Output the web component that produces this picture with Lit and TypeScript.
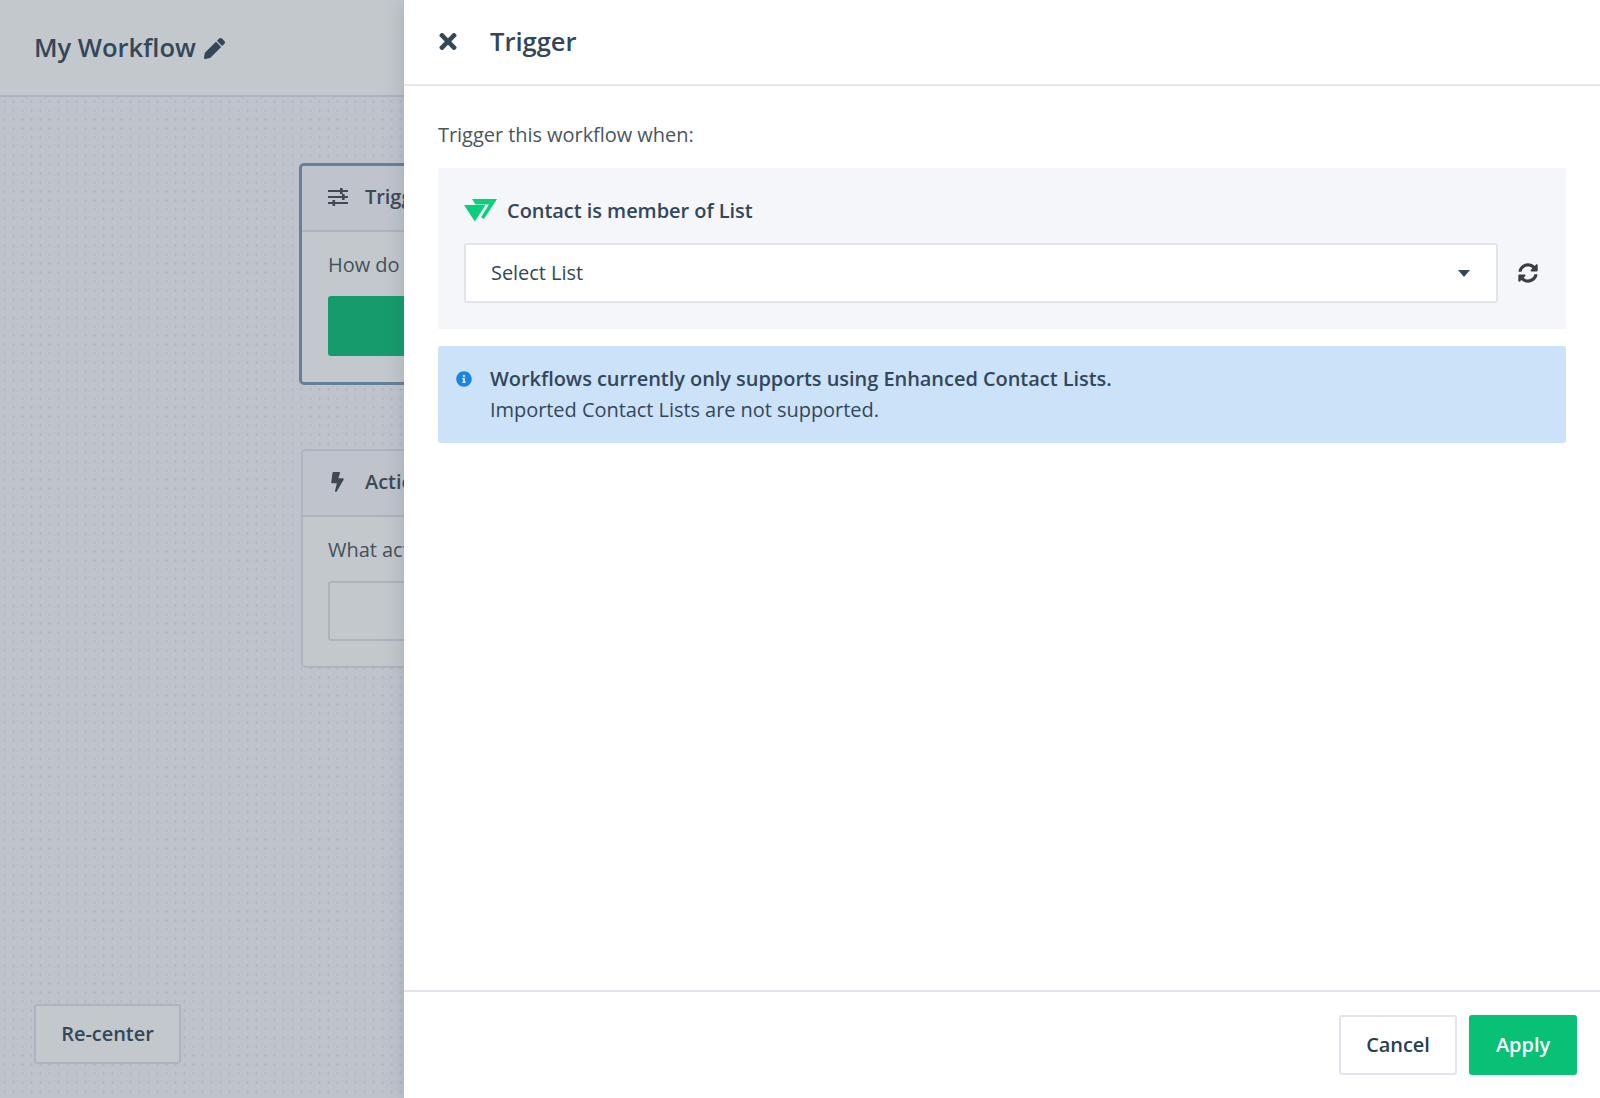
import { LitElement, html, css, svg } from "lit";
import { customElement } from "lit/decorators.js";

const PENCIL = "M497.9 142.1l-46.1 46.1c-4.7 4.7-12.3 4.7-17 0l-111-111c-4.7-4.7-4.7-12.3 0-17l46.1-46.1c18.7-18.7 49.1-18.7 67.9 0l60.1 60.1c18.8 18.7 18.8 49.1 0 67.9zM284.2 99.8L21.6 362.4.4 483.9c-2.9 16.4 11.4 30.6 27.8 27.8l121.5-21.3 262.6-262.6c4.7-4.7 4.7-12.3 0-17l-111-111c-4.8-4.7-12.4-4.7-17.1 0z";
const TIMES = "M242.72 256l100.07-100.07c12.28-12.28 12.28-32.19 0-44.48l-22.24-22.24c-12.28-12.28-32.19-12.28-44.48 0L176 189.28 75.93 89.21c-12.28-12.28-32.19-12.28-44.48 0L9.21 111.45c-12.28 12.28-12.28 32.19 0 44.48L109.28 256 9.21 356.07c-12.28 12.28-12.28 32.19 0 44.48l22.24 22.24c12.28 12.28 32.2 12.28 44.48 0L176 322.72l100.07 100.07c12.28 12.28 32.2 12.28 44.48 0l22.24-22.24c12.28-12.28 12.28-32.19 0-44.48L242.72 256z";
const SYNC = "M370.72 133.28C339.458 104.008 298.888 87.962 255.848 88c-77.458.068-144.328 53.178-162.791 126.85-1.344 5.363-6.122 9.15-11.651 9.15H24.103c-7.498 0-13.194-6.807-11.807-14.176C33.933 94.924 134.813 8 256 8c66.448 0 126.791 26.136 171.315 68.685L463.03 40.97C478.149 25.851 504 36.559 504 57.941V192c0 13.255-10.745 24-24 24H345.941c-21.382 0-32.09-25.851-16.971-40.971l41.75-41.749zM32 296h134.059c21.382 0 32.09 25.851 16.971 40.971l-41.75 41.75c31.262 29.273 71.835 45.319 114.876 45.28 77.418-.07 144.315-53.144 162.787-126.849 1.344-5.363 6.122-9.15 11.651-9.15h57.304c7.498 0 13.194 6.807 11.807 14.176C478.067 417.076 377.187 504 256 504c-66.448 0-126.791-26.136-171.315-68.685L48.97 471.03C33.851 486.149 8 475.441 8 454.059V320c0-13.255 10.745-24 24-24z";
const INFO = "M256 8C119.043 8 8 119.083 8 256c0 136.997 111.043 248 248 248s248-111.003 248-248C504 119.083 392.957 8 256 8zm0 110c23.196 0 42 18.804 42 42s-18.804 42-42 42-42-18.804-42-42 18.804-42 42-42zm56 254c0 6.627-5.373 12-12 12h-88c-6.627 0-12-5.373-12-12v-24c0-6.627 5.373-12 12-12h12v-64h-12c-6.627 0-12-5.373-12-12v-24c0-6.627 5.373-12 12-12h64c6.627 0 12 5.373 12 12v100h12c6.627 0 12 5.373 12 12v24z";
const BOLT = "M296 160H180.6l42.6-129.8C227.2 15 215.7 0 200 0H56C44 0 33.8 8.9 32.2 20.8l-32 240C-1.7 275.2 9.5 288 24 288h118.7L96.6 482.5c-3.6 15.2 8 29.5 23.3 29.5 8.4 0 16.4-4.4 20.8-12l176-304c9.3-15.9-2.2-36-20.7-36z";

const icon = (d: string, vb: string, cls: string) =>
  html`<svg class=${cls} viewBox=${vb} fill="currentColor">${svg`<path d=${d}></path>`}</svg>`;

@customElement("app-root")
export class AppRoot extends LitElement {
  static styles = css`
    :host {
      display: block;
      position: relative;
      width: 1600px;
      height: 1098px;
      overflow: hidden;
      font-family: "Open Sans", sans-serif;
      letter-spacing: -0.05px;
      color: #33475b;
      background: #f9f9ff;
    }
    * { box-sizing: border-box; }
    .page { display: flex; flex-direction: column; height: 1098px; width: 404px; }
    .top {
      height: 97px;
      flex: none;
      background: #fff;
      border-bottom: 2px solid #dfe3eb;
      padding: 0 34px;
      display: flex;
      align-items: center;
      gap: 8px;
      font-size: 25.6px;
      font-weight: 600;
      width: 1600px;
    }
    .pencil { width: 21px; height: 21px; margin-top: 1px; }
    .canvas {
      position: relative;
      flex: 1;
      width: 1600px;
      background-color: #f9f9ff;
      background-image: radial-gradient(circle at center, #e2e3ec 0.7px, transparent 1.5px);
      background-size: 9px 9px;
    }
    .card {
      position: absolute;
      left: 301px;
      width: 400px;
      background: #fff;
      border: 2px solid #dfe3eb;
      border-radius: 5px;
      overflow: hidden;
    }
    .card.trigger { top: 66px; height: 222px; border: 3px solid #7c98b6; left: 299px; }
    .card.action { top: 352px; height: 219px; }
    .card-head {
      height: 66px;
      display: flex;
      align-items: center;
      gap: 17px;
      padding: 0 0 3px 26px;
      background: #f9f9ff;
      border-bottom: 2px solid #dfe3eb;
      font-size: 20px;
      font-weight: 600;
      color: #424a52;
    }
    .card.action .card-head { padding-left: 27px; gap: 20px; }
    .head-icon { width: 20px; height: 20px; flex: none; }
    .card.action .head-icon { width: 15px; height: 20px; }
    .card-body { padding: 18px 0 0 26px; font-size: 20px; color: #4a5560; line-height: 30px; }
    .card.action .card-body { padding-left: 25px; }
    .green { margin-top: 16px; width: 300px; height: 60px; background: #08c076; border-radius: 3px; }
    .blank { margin-top: 16px; width: 300px; height: 60px; background: #fff; border: 2px solid #dfe3eb; border-radius: 3px; }
    .recenter {
      position: absolute;
      left: 34px;
      top: 907px;
      width: 147px;
      height: 60px;
      background: #fff;
      border: 2px solid #dfe3eb;
      border-radius: 3px;
      font: 600 20px "Open Sans", sans-serif;
      letter-spacing: -0.05px;
      color: #33475b;
      padding: 0 0 2px;
    }
    .overlay { position: absolute; inset: 0; background: rgba(55, 72, 85, 0.3); }
    .panel {
      position: absolute;
      left: 404px;
      top: 0;
      width: 1196px;
      height: 1098px;
      background: #fff;
      display: flex;
      flex-direction: column;
      box-shadow: 0 0 20px rgba(51, 71, 91, 0.2);
    }
    .panel-head {
      height: 86px;
      flex: none;
      display: flex;
      align-items: center;
      padding: 0 0 1px 34px;
      gap: 32px;
      border-bottom: 2px solid #e6e7ef;
      font-size: 25.6px;
      font-weight: 600;
    }
    .close { width: 20px; height: 25px; }
    .panel-body { flex: 1; padding: 33px 34px 0; }
    .lead { font-size: 20px; line-height: 32px; color: #4a5560; margin-bottom: 17px; }
    .grey {
      background: #f4f6fa;
      padding: 24px 0 26px 26px;
      height: 161px;
    }
    .cond {
      display: flex;
      align-items: center;
      gap: 10px;
      height: 36px;
      font-size: 20px;
      font-weight: 600;
      margin-bottom: 15px;
    }
    .logo { width: 33px; height: 24px; flex: none; }
    .select-row { display: flex; align-items: center; gap: 20px; }
    .select {
      width: 1034px;
      height: 60px;
      background: #fff;
      border: 2px solid #e2e4ec;
      border-radius: 3px;
      display: flex;
      align-items: center;
      justify-content: space-between;
      padding: 0 26px 1px 25px;
      font-size: 20px;
    }
    .caret { width: 12px; height: 7px; margin-top: 1px; }
    .refresh { width: 20px; height: 20px; color: #3b3f43; }
    .note {
      margin-top: 17px;
      height: 97px;
      background: #cbe2f9;
      border-radius: 3px;
      display: flex;
      padding: 17px 0 0 18px;
      gap: 18px;
      font-size: 20px;
      line-height: 31px;
    }
    .info { width: 16px; height: 16px; color: #1a84e5; margin-top: 8px; flex: none; }
    .note b { display: block; font-weight: 600; }
    .panel-foot {
      height: 108px;
      flex: none;
      border-top: 2px solid #e2e4ec;
      display: flex;
      justify-content: flex-end;
      gap: 12px;
      padding: 23px 23px 0 0;
    }
    .btn {
      height: 60px;
      border-radius: 3px;
      font: 600 20px "Open Sans", sans-serif;
      letter-spacing: -0.05px;
      border: 2px solid #e2e4ec;
      background: #fff;
      color: #2d3e50;
      width: 118px;
      padding: 0 0 1px;
    }
    .btn.primary { background: #08c076; border-color: #08c076; color: #fff; width: 108px; }
  `;

  render() {
    return html`
      <div class="page">
        <div class="top">My Workflow ${icon(PENCIL, "0 0 512 512", "pencil")}</div>
        <div class="canvas">
          <div class="card trigger">
            <div class="card-head">
              <svg class="head-icon" viewBox="0 0 20 20" fill="currentColor">
                <rect x="0" y="3" width="20" height="2"></rect>
                <rect x="0" y="9" width="20" height="2"></rect>
                <rect x="0" y="15" width="20" height="2"></rect>
                <rect x="12" y="1" width="2.6" height="6"></rect>
                <rect x="14" y="7" width="2.6" height="6"></rect>
                <rect x="4.5" y="13" width="2.6" height="6"></rect>
              </svg>
              <span>Trigger</span>
            </div>
            <div class="card-body">How do you<div class="green"></div></div>
          </div>
          <div class="card action">
            <div class="card-head">${icon(BOLT, "0 0 320 512", "head-icon")}<span>Action</span></div>
            <div class="card-body">What action?<div class="blank"></div></div>
          </div>
          <button class="recenter">Re-center</button>
        </div>
      </div>
      <div class="overlay"></div>
      <aside class="panel">
        <header class="panel-head">${icon(TIMES, "0 0 352 512", "close")}<span>Trigger</span></header>
        <div class="panel-body">
          <div class="lead">Trigger this workflow when:</div>
          <div class="grey">
            <div class="cond">
              <svg class="logo" viewBox="0 0 33 24" fill="#0ad07c">
                <path d="M0 7h21.5L10.8 23.5z"></path>
                <path d="M8 1h25L20 21l-3-1.8L25 6.6H11.6z"></path>
              </svg>
              <span>Contact is member of List</span>
            </div>
            <div class="select-row">
              <div class="select">
                <span>Select List</span>
                <svg class="caret" viewBox="0 0 12 7" fill="#33475b"><path d="M0 0h12L6 7z"></path></svg>
              </div>
              ${icon(SYNC, "0 0 512 512", "refresh")}
            </div>
          </div>
          <div class="note">
            ${icon(INFO, "0 0 512 512", "info")}
            <div><b>Workflows currently only supports using Enhanced Contact Lists.</b>Imported Contact Lists are not supported.</div>
          </div>
        </div>
        <footer class="panel-foot">
          <button class="btn">Cancel</button>
          <button class="btn primary">Apply</button>
        </footer>
      </aside>
    `;
  }
}
